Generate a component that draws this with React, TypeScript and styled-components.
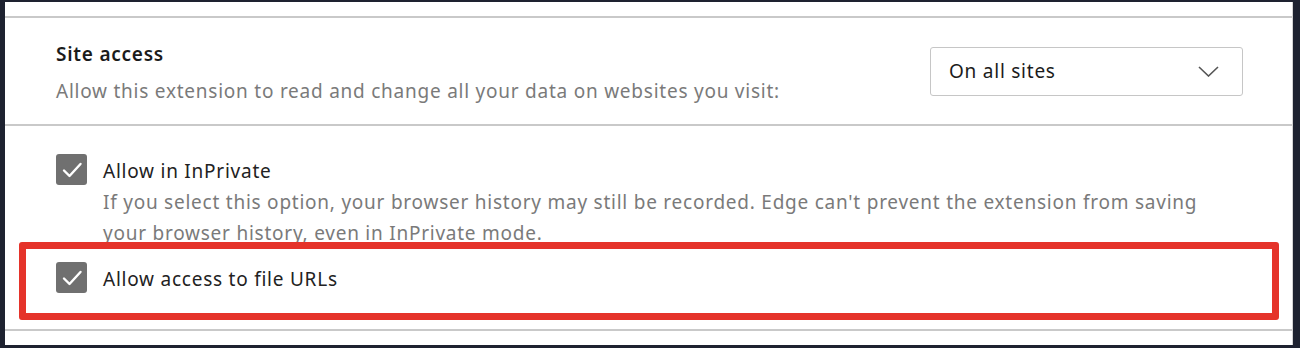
import React from 'react';
import styled, { createGlobalStyle } from 'styled-components';

const GlobalStyle = createGlobalStyle`
  html, body {
    margin: 0;
    padding: 0;
    background: #1e2230;
  }
  body {
    font-family: 'Noto Sans', 'Open Sans', sans-serif;
    font-size: 19px;
    letter-spacing: 0.76px;
    -webkit-font-smoothing: antialiased;
  }
`;

const Frame = styled.div`
  padding: 2px 7px 3px 5px;
  height: 348px;
  box-sizing: border-box;
`;

const Panel = styled.div`
  position: relative;
  height: 343px;
  background: #ffffff;
  border-right: 1px solid #d4d4d4;
  padding-top: 14px;
  box-sizing: border-box;
`;

const Section = styled.div<{ $last?: boolean }>`
  border-top: 2px solid #c9c9c9;
  ${(p) => (p.$last ? 'border-bottom: 2px solid #c9c9c9;' : '')}
`;

const AccessRow = styled.div`
  display: flex;
  align-items: center;
  justify-content: space-between;
  height: 106px;
  padding: 0 49px 0 51px;
`;

const TextBlock = styled.div`
  display: flex;
  flex-direction: column;
  gap: 6px;
  margin-top: 4px;
`;

const Title = styled.div`
  font-weight: 600;
  line-height: 31px;
  color: #1b1b1b;
`;

const Hint = styled.div`
  line-height: 31px;
  color: #7a7a7a;
`;

const Select = styled.div`
  display: flex;
  align-items: center;
  justify-content: space-between;
  width: 313px;
  height: 49px;
  box-sizing: border-box;
  border: 1px solid #c6c6c6;
  border-radius: 3px;
  padding: 0 23px 0 18px;
  color: #1b1b1b;
`;

const Options = styled.div`
  display: flex;
  flex-direction: column;
  gap: 13px;
  padding: 28px 51px 34px;
`;

const Option = styled.div`
  display: flex;
  gap: 16px;
`;

const Box = styled.div`
  flex: none;
  width: 31px;
  height: 31px;
  border-radius: 3px;
  background: #707070;
  display: flex;
  align-items: center;
  justify-content: center;
`;

const OptionText = styled.div`
  display: flex;
  flex-direction: column;
  padding-top: 2px;
`;

const Label = styled.div`
  line-height: 31px;
  color: #222222;
`;

const Highlight = styled.div`
  position: absolute;
  left: 14px;
  top: 240px;
  width: 1260px;
  height: 78px;
  box-sizing: border-box;
  border: 7px solid #e5332a;
  border-radius: 3px;
  pointer-events: none;
`;

const Check: React.FC = () => (
  <Box>
    <svg width="22" height="18" viewBox="0 0 22 18">
      <path d="M3 9.5 L8.5 15 L19.5 3" fill="none" stroke="#ffffff" strokeWidth="2.4" strokeLinecap="round" strokeLinejoin="round" />
    </svg>
  </Box>
);

const Chevron: React.FC = () => (
  <svg width="21" height="11" viewBox="0 0 21 11">
    <path d="M1 1 L10.5 10 L20 1" fill="none" stroke="#555555" strokeWidth="1.6" />
  </svg>
);

const App: React.FC = () => (
  <Frame>
    <GlobalStyle />
    <Panel>
      <Section>
        <AccessRow>
          <TextBlock>
            <Title>Site access</Title>
            <Hint>Allow this extension to read and change all your data on websites you visit:</Hint>
          </TextBlock>
          <Select>
            On all sites
            <Chevron />
          </Select>
        </AccessRow>
      </Section>
      <Section $last>
        <Options>
          <Option>
            <Check />
            <OptionText>
              <Label>Allow in InPrivate</Label>
              <Hint>
                If you select this option, your browser history may still be recorded. Edge can't prevent the extension from saving
                <br />
                your browser history, even in InPrivate mode.
              </Hint>
            </OptionText>
          </Option>
          <Option>
            <Check />
            <OptionText>
              <Label>Allow access to file URLs</Label>
            </OptionText>
          </Option>
        </Options>
      </Section>
      <Highlight />
    </Panel>
  </Frame>
);

export default App;
